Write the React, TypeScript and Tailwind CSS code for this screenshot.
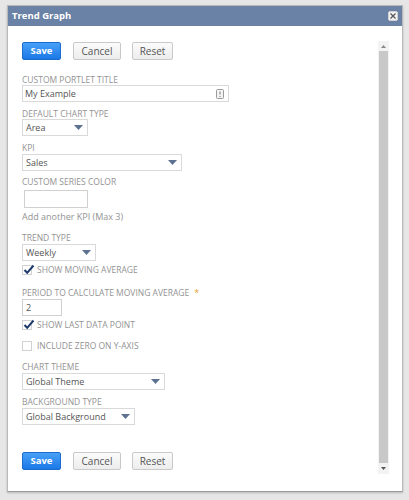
import React from "react";

function Arrow() {
  return (
    <svg width="9" height="5" viewBox="0 0 9 5" className="shrink-0">
      <path d="M0 0 L9 0 L4.5 5 Z" fill="#5d7191" />
    </svg>
  );
}

function Label({ children, className = "" }: { children: React.ReactNode; className?: string }) {
  return (
    <div className={"h-[10px] text-[8.5px] leading-[10px] text-[#939393] uppercase whitespace-nowrap " + className}>
      {children}
    </div>
  );
}

function Select({ value, w, className = "" }: { value: string; w: string; className?: string }) {
  return (
    <div
      className={
        "h-[17px] border border-[#d9d9d9] bg-white flex items-center justify-between pl-[3px] pr-[4px] text-[9px] text-[#555] " +
        w +
        " " +
        className
      }
    >
      <span className="leading-none">{value}</span>
      <Arrow />
    </div>
  );
}

function Check({ checked, label, className = "" }: { checked: boolean; label: string; className?: string }) {
  return (
    <div className={"h-[12px] flex items-center " + className}>
      <div className="w-[10px] h-[10px] border border-[#d2d2d2] bg-white relative shrink-0">
        {checked && (
          <svg width="12" height="11" viewBox="0 0 12 11" className="absolute left-[0px] top-[-2px]">
            <path d="M1.5 6 L4.2 8.8 L10.5 1.5" stroke="#1d3a6b" strokeWidth="2" fill="none" />
          </svg>
        )}
      </div>
      <span className="ml-[5px] text-[8.5px] leading-none text-[#939393] uppercase">{label}</span>
    </div>
  );
}

function Buttons({ className = "" }: { className?: string }) {
  return (
    <div className={"flex items-center h-[18px] " + className}>
      <div className="w-[39px] h-[18px] rounded-[2px] border border-[#1b6ccc] bg-gradient-to-b from-[#47a0f8] to-[#1a78e6] flex items-center justify-center text-white text-[9.5px] font-bold">
        Save
      </div>
      <div className="ml-[12px] w-[48px] h-[18px] rounded-[2px] border border-[#c9c9c9] bg-gradient-to-b from-[#fbfbfb] to-[#ededed] flex items-center justify-center text-[#555] text-[10px]">
        Cancel
      </div>
      <div className="ml-[11px] w-[41px] h-[18px] rounded-[2px] border border-[#c9c9c9] bg-gradient-to-b from-[#fbfbfb] to-[#ededed] flex items-center justify-center text-[#555] text-[10px]">
        Reset
      </div>
    </div>
  );
}

export default function App() {
  return (
    <div className="w-[409px] h-[500px] bg-[#e6e6e6] overflow-hidden pt-[5px] pl-[7px] font-['Open_Sans',sans-serif]">
      <div className="w-[396px] h-[487px] border border-[#b9b9b9] border-b-[#9a9a9a] bg-white flex flex-col shadow-[0_1px_2px_rgba(0,0,0,0.2)]">
        <div className="h-[20px] bg-[#6982a5] flex items-center justify-between pl-[4px] pr-[4px] shrink-0">
          <span className="text-white text-[9.5px] font-bold leading-none">Trend Graph</span>
          <div className="w-[10px] h-[10px] rounded-[2px] bg-[#f4f4f4] border border-[#d0d0d0] flex items-center justify-center">
            <svg width="6" height="6" viewBox="0 0 6 6">
              <path d="M0.5 0.5 L5.5 5.5 M5.5 0.5 L0.5 5.5" stroke="#555" strokeWidth="1.2" />
            </svg>
          </div>
        </div>
        <div className="flex flex-1">
          <div className="flex-1 pl-[14px] pt-[16px]">
            <Buttons />
            <Label className="mt-[15px]">Custom Portlet Title</Label>
            <div className="w-[207px] h-[17px] border border-[#d9d9d9] flex items-center justify-between pl-[2px] pr-[4px] text-[9px] text-[#555]">
              <span className="leading-none">My Example</span>
              <svg width="8" height="10" viewBox="0 0 8 10">
                <rect x="0.5" y="0.5" width="7" height="9" rx="1" fill="#f4f4f4" stroke="#9a9a9a" />
                <path d="M4 2.5 L4 5.5" stroke="#777" strokeWidth="1" />
                <path d="M4 7 L4 8" stroke="#777" strokeWidth="1" />
              </svg>
            </div>
            <Label className="mt-[7px]">Default Chart Type</Label>
            <Select value="Area" w="w-[66px]" />
            <Label className="mt-[7px]">KPI</Label>
            <Select value="Sales" w="w-[160px]" className="mt-[1px]" />
            <Label className="mt-[6px]">Custom Series Color</Label>
            <div className="ml-[2px] mt-[3px] w-[64px] h-[18px] border border-[#d0d0d0] bg-white" />
            <div className="mt-[3px] h-[12px] text-[9px] leading-[12px] text-[#939393]">Add another KPI (Max 3)</div>
            <Label className="mt-[10px]">Trend Type</Label>
            <Select value="Weekly" w="w-[74px]" className="mt-[1px]" />
            <Check checked label="Show Moving Average" className="mt-[3px]" />
            <div className="mt-[12px] h-[10px] flex items-start">
              <Label>Period to Calculate Moving Average</Label>
              <span className="ml-[5px] text-[9px] leading-[10px] text-[#e3a23a]">*</span>
            </div>
            <div className="mt-[1px] w-[40px] h-[17px] border border-[#d0d0d0] flex items-center pl-[3px] text-[9px] text-[#555]">
              <span className="leading-none">2</span>
            </div>
            <Check checked label="Show Last Data Point" className="mt-[3px]" />
            <Check checked={false} label="Include Zero on Y-Axis" className="mt-[9px]" />
            <Label className="mt-[10px]">Chart Theme</Label>
            <Select value="Global Theme" w="w-[143px]" className="mt-[1px]" />
            <Label className="mt-[7px]">Background Type</Label>
            <Select value="Global Background" w="w-[113px]" className="mt-[1px]" />
            <Buttons className="mt-[27px]" />
          </div>
          <div className="w-[11px] mt-[15px] h-[433px] bg-[#f3f3f3] flex flex-col items-center mr-[13px]">
            <div className="h-[10px] flex items-center justify-center">
              <svg width="5" height="3" viewBox="0 0 5 3">
                <path d="M0 3 L5 3 L2.5 0 Z" fill="#888" />
              </svg>
            </div>
            <div className="w-[9px] flex-1 bg-[#c8c8c8]" />
            <div className="h-[11px] flex items-center justify-center">
              <svg width="5" height="3" viewBox="0 0 5 3">
                <path d="M0 0 L5 0 L2.5 3 Z" fill="#555" />
              </svg>
            </div>
          </div>
        </div>
      </div>
    </div>
  );
}
